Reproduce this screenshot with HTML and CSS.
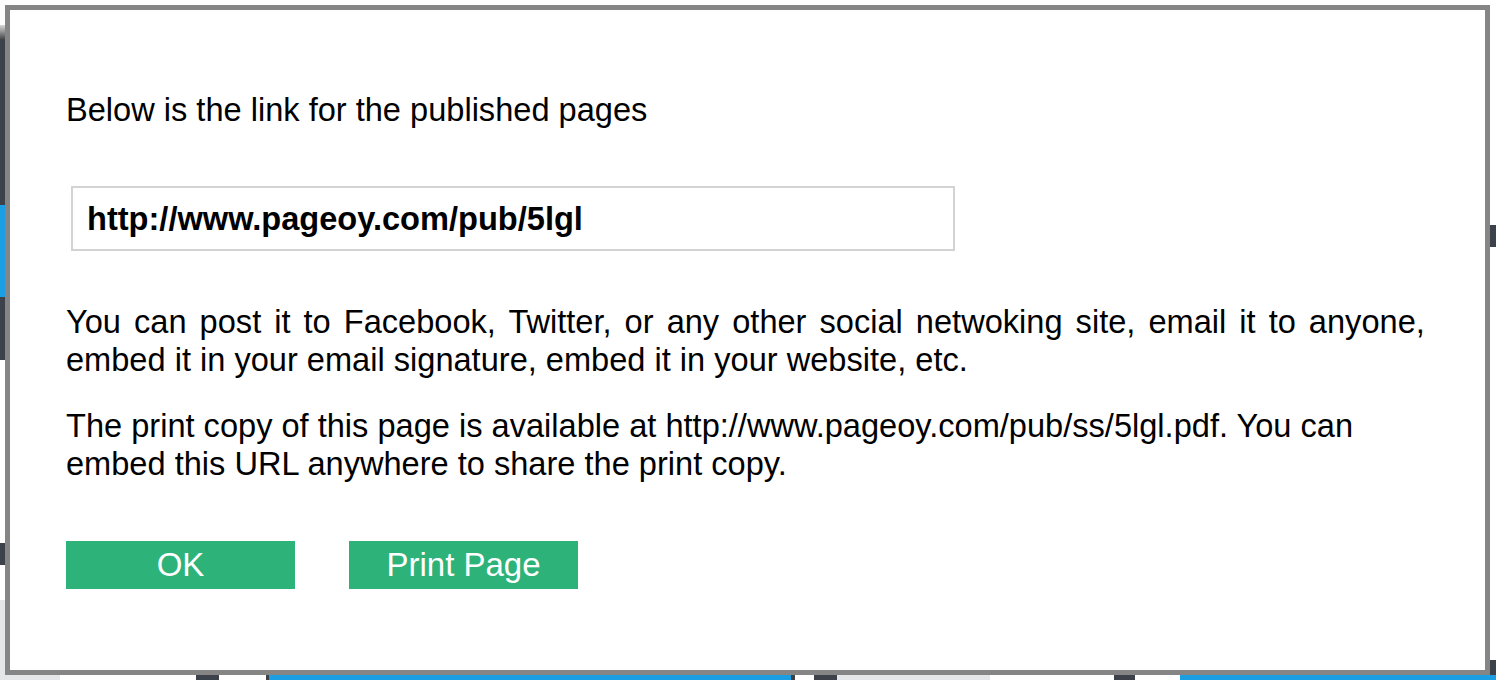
FILE: index.html
```html
<!DOCTYPE html>
<html>
<head>
	<title>Published</title>
	<meta charset="utf-8">
	<link rel="stylesheet" href="styles.css">
</head>
<body>
	<div class="screen">
		<div class="top-edge"></div>

		<div class="middle">
			<!-- page behind the dialog, left side -->
			<div class="side side-left">
				<span class="seg s-white" style="height: 20px"></span>
				<span class="seg s-fade" style="height: 15px"></span>
				<span class="seg s-dark" style="height: 165px"></span>
				<span class="seg s-blue" style="height: 92px"></span>
				<span class="seg s-dark" style="height: 63px"></span>
				<span class="seg s-white" style="height: 183px"></span>
				<span class="seg s-dark" style="height: 22px"></span>
				<span class="seg s-white" style="height: 35px"></span>
				<span class="seg s-light" style="height: 75px"></span>
			</div>

			<div class="dialog">
				<p class="lead">Below is the link for the published pages</p>

				<input class="link-box" type="text" readonly value="http://www.pageoy.com/pub/5lgl">

				<p class="note"><span class="wide">You can post it to Facebook, Twitter, or any other social netwoking site, email it to anyone,</span><br>embed it in your email signature, embed it in your website, etc.</p>

				<p class="note note-print">The print copy of this page is available at http://www.pageoy.com/pub/ss/5lgl.pdf. You can<br>embed this URL anywhere to share the print copy.</p>

				<div class="actions">
					<button class="btn">OK</button>
					<button class="btn">Print Page</button>
				</div>
			</div>

			<!-- page behind the dialog, right side -->
			<div class="side side-right">
				<span class="seg s-white" style="height: 220px"></span>
				<span class="seg s-dark" style="height: 22px"></span>
				<span class="seg s-white" style="height: 413px"></span>
				<span class="seg s-dark" style="height: 15px"></span>
			</div>
		</div>

		<!-- page behind the dialog, bottom edge -->
		<div class="bottom-edge">
			<span class="seg s-light" style="width: 60px"></span>
			<span class="seg s-white" style="width: 136px"></span>
			<span class="seg s-dark" style="width: 23px"></span>
			<span class="seg s-white" style="width: 47px"></span>
			<span class="seg s-dark" style="width: 3px"></span>
			<span class="seg s-blue" style="width: 522px"></span>
			<span class="seg s-dark" style="width: 4px"></span>
			<span class="seg s-white" style="width: 19px"></span>
			<span class="seg s-dark" style="width: 23px"></span>
			<span class="seg s-light" style="width: 153px"></span>
			<span class="seg s-white" style="width: 124px"></span>
			<span class="seg s-dark" style="width: 21px"></span>
			<span class="seg s-white" style="width: 45px"></span>
			<span class="seg s-blue grow"></span>
		</div>
	</div>
</body>
</html>
```

FILE: styles.css
```css
html,body{
	margin: 0;
	padding: 0;
	background-color: #ffffff;
}

.screen{
	width: 1496px;
	height: 680px;
	display: flex;
	flex-direction: column;
	overflow: hidden;
}

.top-edge{
	height: 5px;
	background-color: #ffffff;
}

.middle{
	display: flex;
	height: 670px;
}

/* strips of the page that shows round the dialog */
.side{
	display: flex;
	flex-direction: column;
}
.side-left{
	width: 5px;
}
.side-right{
	width: 6px;
}

.bottom-edge{
	display: flex;
	height: 5px;
}

.seg{
	display: block;
	flex-shrink: 0;
}
.grow{
	flex: 1;
}
.s-white{
	background-color: #ffffff;
}
.s-light{
	background-color: #e4e6e8;
}
.s-fade{
	background: linear-gradient(#d8d8d8, #3d3f43);
}
.s-dark{
	background-color: #3d4149;
}
.s-blue{
	background-color: #1c9ee2;
}

/* the dialog */
.dialog{
	width: 1485px;
	height: 670px;
	box-sizing: border-box;
	border: 5px solid #858585;
	background-color: #ffffff;
	padding: 81px 0 0 56px;
	font-family: "Liberation Sans", Arial, sans-serif;
	color: #000000;
}

.lead,
.note{
	margin: 0;
	font-size: 32.6px;
	line-height: 38px;
}

.link-box{
	display: block;
	margin: 57px 0 0 5px;
	width: 884px;
	height: 65px;
	box-sizing: border-box;
	border: 2px solid #d3d3d3;
	padding: 0 0 0 14px;
	font-family: "Liberation Sans", Arial, sans-serif;
	font-size: 32.6px;
	font-weight: bold;
	color: #000000;
	outline: none;
}

.note{
	margin-top: 52px;
}
.note-print{
	margin-top: 28px;
}

/* the first line is set a little looser in the original */
.wide{
	word-spacing: 4px;
}

.actions{
	display: flex;
	gap: 54px;
	margin-top: 58px;
}

.btn{
	width: 229px;
	height: 48px;
	border: none;
	background-color: #2db37a;
	color: #ffffff;
	font-family: "Liberation Sans", Arial, sans-serif;
	font-size: 33px;
	padding: 0;
}
```
